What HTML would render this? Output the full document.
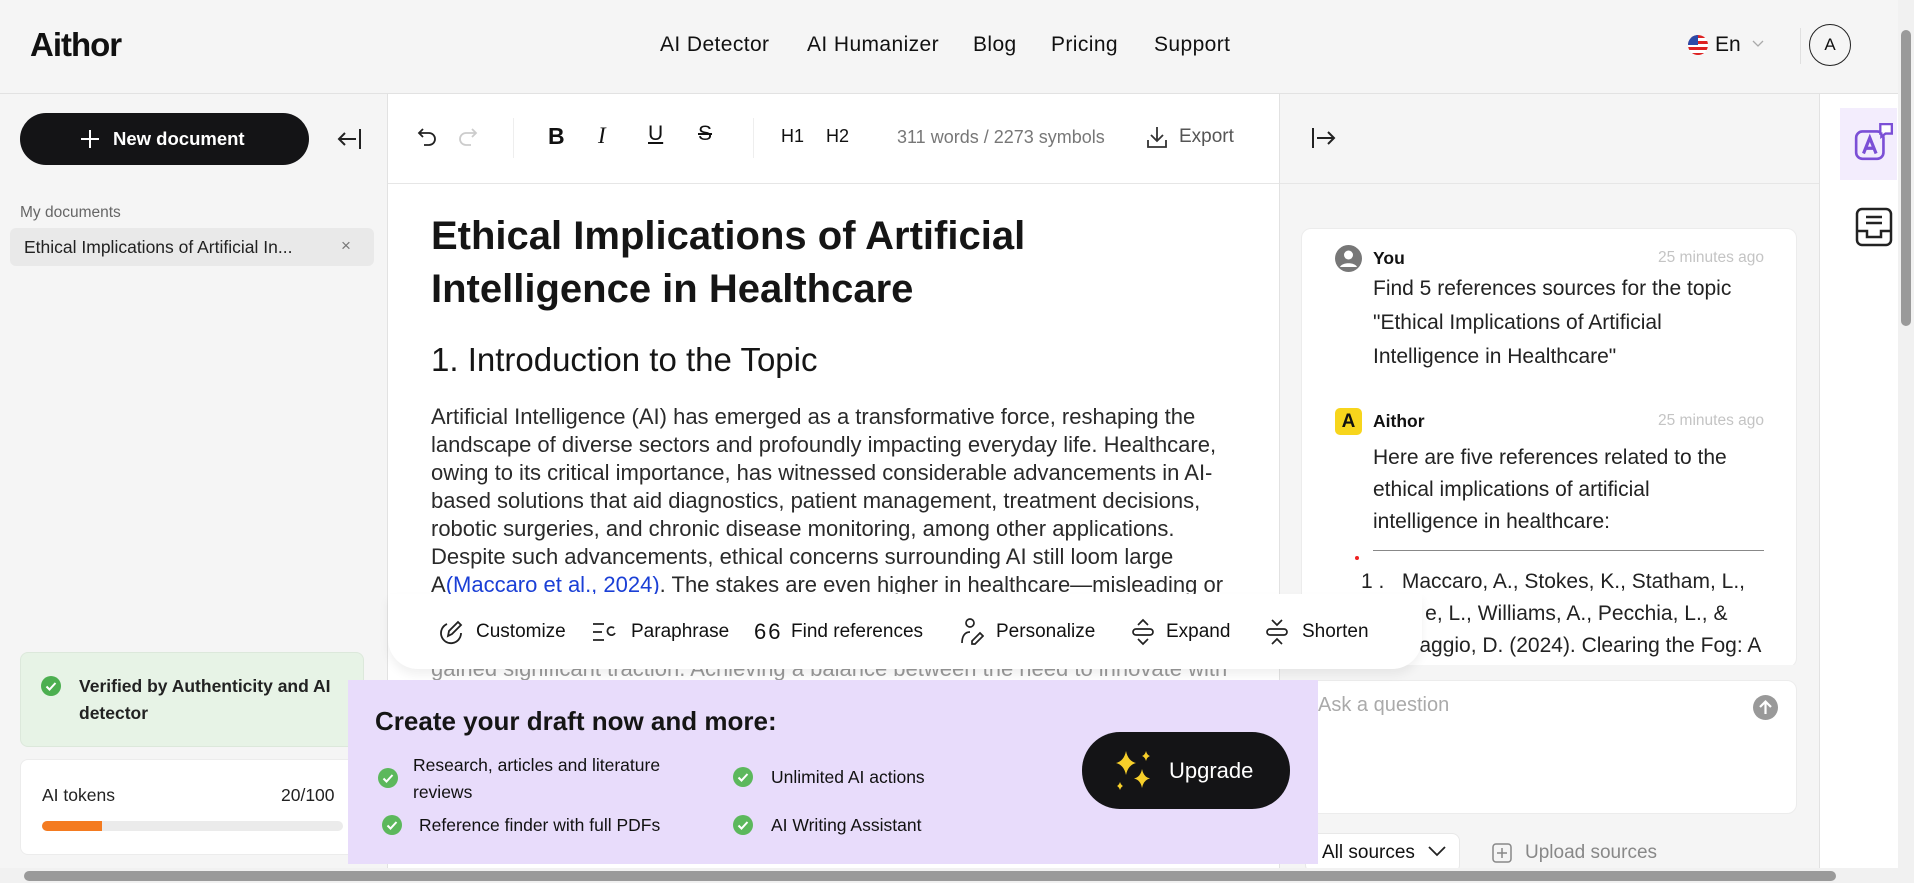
<!DOCTYPE html>
<html><head><meta charset="utf-8"><style>
*{box-sizing:border-box;margin:0;padding:0}
body{width:1914px;height:883px;overflow:hidden;background:#f5f5f5;font-family:"Liberation Sans",Arial,sans-serif;color:#111;position:relative}
.a{position:absolute;white-space:nowrap}
svg{display:block}
</style></head><body>
<!-- header -->
<div class="a" style="left:0;top:0;width:1898px;height:94px;background:#f5f5f5;border-bottom:1px solid #e2e2e2"></div>
<div class="a" style="left:30px;top:26px;font-size:33px;font-weight:bold;letter-spacing:-1px">Aithor</div>
<div class="a" style="left:660px;top:33px;font-size:21px;letter-spacing:0.4px">AI Detector</div>
<div class="a" style="left:807px;top:33px;font-size:21px;letter-spacing:0.4px">AI Humanizer</div>
<div class="a" style="left:973px;top:33px;font-size:21px;letter-spacing:0.4px">Blog</div>
<div class="a" style="left:1051px;top:33px;font-size:21px;letter-spacing:0.4px">Pricing</div>
<div class="a" style="left:1154px;top:33px;font-size:21px;letter-spacing:0.4px">Support</div>
<svg class="a" style="left:1688px;top:35px" width="20" height="20" viewBox="0 0 20 20"><defs><clipPath id="c"><circle cx="10" cy="10" r="10"/></clipPath></defs><g clip-path="url(#c)"><rect width="20" height="20" fill="#fff"/><rect y="0" width="20" height="3" fill="#d22"/><rect y="6" width="20" height="3" fill="#d22"/><rect y="12" width="20" height="3" fill="#d22"/><rect y="18" width="20" height="3" fill="#d22"/><rect width="10" height="10" fill="#2b4aa8"/></g></svg>
<div class="a" style="left:1715px;top:33px;font-size:21px">En</div>
<svg class="a" style="left:1752px;top:40px" width="12" height="8"><path d="M1 1l5 5 5-5" stroke="#aaa" fill="none" stroke-width="1.3"/></svg>
<div class="a" style="left:1800px;top:28px;width:1px;height:36px;background:#e0e0e0"></div>
<div class="a" style="left:1809px;top:24px;width:42px;height:42px;border:1.5px solid #222;border-radius:50%;text-align:center;line-height:39px;font-size:17px">A</div>

<!-- left sidebar -->
<div class="a" style="left:387px;top:94px;width:1px;height:789px;background:#e2e2e2"></div>
<div class="a" style="left:20px;top:113px;width:289px;height:52px;background:#141416;border-radius:26px;color:#fff;font-size:18.5px;font-weight:bold;line-height:52px;padding-left:93px">New document</div>
<svg class="a" style="left:80px;top:129px" width="20" height="20"><path d="M10 1v18M1 10h18" stroke="#fff" stroke-width="2"/></svg>
<svg class="a" style="left:336px;top:127px" width="26" height="24"><path d="M24 2v20M20 12H3M9 6l-6 6 6 6" stroke="#222" stroke-width="2" fill="none"/></svg>
<div class="a" style="left:20px;top:204px;font-size:15.5px;color:#666">My documents</div>
<div class="a" style="left:10px;top:228px;width:364px;height:38px;background:#e9e9e9;border-radius:6px"></div>
<div class="a" style="left:24px;top:237px;font-size:17.5px;color:#222">Ethical Implications of Artificial In...</div>
<div class="a" style="left:341px;top:236px;font-size:17px;color:#777">×</div>

<div class="a" style="left:20px;top:652px;width:344px;height:95px;background:#e7f3e6;border:1px solid #dce8db;border-radius:8px"></div>
<svg class="a" style="left:41px;top:676px" width="20" height="20"><circle cx="10" cy="10" r="10" fill="#4caf50"/><path d="M5.5 10.5l3 3 6-6.5" stroke="#fff" stroke-width="2" fill="none"/></svg>
<div class="a" style="left:79px;top:673px;font-size:17.5px;font-weight:bold;line-height:27px;color:#222">Verified by Authenticity and AI<br>detector</div>
<div class="a" style="left:20px;top:759px;width:344px;height:96px;background:#fff;border:1px solid #ececec;border-radius:8px"></div>
<div class="a" style="left:42px;top:785px;font-size:17.5px;color:#222">AI tokens</div>
<div class="a" style="left:281px;top:785px;font-size:17.5px;color:#222">20/100</div>
<div class="a" style="left:42px;top:821px;width:301px;height:10px;background:#ebebeb;border-radius:5px"></div>
<div class="a" style="left:42px;top:821px;width:60px;height:10px;background:#f47b20;border-radius:5px 0 0 5px"></div>

<!-- chat panel (behind toolbar) -->
<div class="a" style="left:1280px;top:94px;width:539px;height:789px;background:#f5f5f5"></div>
<div class="a" style="left:1280px;top:183px;width:539px;height:1px;background:#e6e6e6"></div>
<div class="a" style="left:1819px;top:94px;width:1px;height:789px;background:#e2e2e2"></div>
<svg class="a" style="left:1311px;top:126px" width="26" height="24"><path d="M2 2v20M6 12h17M17 6l6 6-6 6" stroke="#222" stroke-width="2" fill="none"/></svg>
<div class="a" style="left:1301px;top:228px;width:496px;height:440px;background:#fff;border:1px solid #ececec;border-radius:10px"></div>
<svg class="a" style="left:1335px;top:245px" width="27" height="27"><circle cx="13.5" cy="13.5" r="13.5" fill="#777"/><circle cx="13.5" cy="10" r="4.5" fill="#fff"/><path d="M5 22c2-5 15-5 17 0" fill="#fff"/></svg>
<div class="a" style="left:1373px;top:248px;font-size:17.5px;font-weight:bold">You</div>
<div class="a" style="left:1614px;top:249px;width:150px;text-align:right;font-size:15.5px;color:#c4c4c4">25 minutes ago</div>
<div class="a" style="left:1373px;top:272px;font-size:21px;line-height:34px;color:#222">Find 5 references sources for the topic<br>"Ethical Implications of Artificial<br>Intelligence in Healthcare"</div>
<div class="a" style="left:1335px;top:408px;width:27px;height:27px;background:#f7d51c;border-radius:5px;text-align:center;line-height:27px;font-weight:bold;font-size:19px">A</div>
<div class="a" style="left:1373px;top:411px;font-size:17.5px;font-weight:bold">Aithor</div>
<div class="a" style="left:1614px;top:412px;width:150px;text-align:right;font-size:15.5px;color:#c4c4c4">25 minutes ago</div>
<div class="a" style="left:1373px;top:442px;font-size:21px;line-height:32px;color:#222">Here are five references related to the<br>ethical implications of artificial<br>intelligence in healthcare:</div>
<div class="a" style="left:1373px;top:550px;width:391px;height:1px;background:#888"></div>
<div class="a" style="left:1355px;top:556px;width:4px;height:4px;border-radius:50%;background:#e22"></div>
<div class="a" style="left:1361px;top:566px;font-size:21px;line-height:32px;color:#222">1 .&nbsp;&nbsp;&nbsp;Maccaro, A., Stokes, K., Statham, L.,<br>&nbsp;&nbsp;&nbsp;&nbsp;&nbsp;&nbsp;&nbsp;&nbsp;&nbsp;&nbsp;&nbsp;e, L., Williams, A., Pecchia, L., &amp;<br>&nbsp;&nbsp;&nbsp;&nbsp;&nbsp;&nbsp;&nbsp;&nbsp;&nbsp;&nbsp;aggio, D. (2024). Clearing the Fog: A</div>
<div class="a" style="left:1300px;top:665px;width:498px;height:14px;background:#f5f5f5"></div>
<div class="a" style="left:1301px;top:680px;width:496px;height:134px;background:#fff;border:1px solid #ececec;border-radius:10px"></div>
<div class="a" style="left:1318px;top:694px;font-size:20px;color:#aaa">Ask a question</div>
<svg class="a" style="left:1753px;top:695px" width="25" height="25"><circle cx="12.5" cy="12.5" r="12.5" fill="#999"/><path d="M12.5 19V7M7 12l5.5-5.5L18 12" stroke="#fff" stroke-width="2.2" fill="none"/></svg>
<div class="a" style="left:1305px;top:833px;width:155px;height:40px;background:#fff;border:1px solid #e8e8e8;border-radius:8px"></div>
<div class="a" style="left:1322px;top:842px;font-size:19px">All sources</div>
<svg class="a" style="left:1427px;top:845px" width="20" height="12"><path d="M2 2l8 8 8-8" stroke="#222" stroke-width="1.8" fill="none"/></svg>
<svg class="a" style="left:1492px;top:843px" width="20" height="20"><rect x="1" y="1" width="18" height="18" rx="3" stroke="#888" stroke-width="1.5" fill="none"/><path d="M10 5v10M5 10h10" stroke="#888" stroke-width="1.5"/></svg>
<div class="a" style="left:1525px;top:842px;font-size:19px;color:#888">Upload sources</div>

<!-- editor -->
<div class="a" style="left:388px;top:94px;width:891px;height:789px;background:#fff"></div>
<div class="a" style="left:388px;top:183px;width:891px;height:1px;background:#e6e6e6"></div>
<div class="a" style="left:1279px;top:94px;width:1px;height:789px;background:#e2e2e2"></div>
<svg class="a" style="left:416px;top:126px" width="22" height="22"><path d="M7 3L3 7l4 4M3 7h10a6 6 0 010 12H8" stroke="#222" stroke-width="1.8" fill="none"/></svg>
<svg class="a" style="left:457px;top:126px" width="22" height="22"><path d="M15 3l4 4-4 4M19 7H9a6 6 0 000 12h5" stroke="#ccc" stroke-width="1.8" fill="none"/></svg>
<div class="a" style="left:513px;top:118px;width:1px;height:40px;background:#eee"></div>
<div class="a" style="left:548px;top:123px;font-size:23px;font-weight:bold">B</div>
<div class="a" style="left:598px;top:123px;font-size:23px;font-style:italic;font-family:'Liberation Serif',serif">I</div>
<div class="a" style="left:648px;top:122px;font-size:21px;text-decoration:underline">U</div>
<div class="a" style="left:698px;top:122px;font-size:21px;text-decoration:line-through">S</div>
<div class="a" style="left:753px;top:118px;width:1px;height:40px;background:#eee"></div>
<div class="a" style="left:781px;top:126px;font-size:18px">H1</div>
<div class="a" style="left:826px;top:126px;font-size:18px">H2</div>
<div class="a" style="left:897px;top:127px;font-size:18px;color:#777">311 words / 2273 symbols</div>
<svg class="a" style="left:1146px;top:125px" width="22" height="24"><path d="M11 2v14M5 10l6 6 6-6M2 15v7h18v-7" stroke="#333" stroke-width="1.8" fill="none"/></svg>
<div class="a" style="left:1179px;top:126px;font-size:19px;color:#555">Export</div>

<div class="a" style="left:431px;top:210px;font-size:40px;font-weight:bold;line-height:53px;color:#151515">Ethical Implications of Artificial<br>Intelligence in Healthcare</div>
<div class="a" style="left:431px;top:341px;font-size:33px;color:#151515">1. Introduction to the Topic</div>
<div class="a" style="left:431px;top:403px;font-size:22px;line-height:28px;color:#2a2a2a">Artificial Intelligence (AI) has emerged as a transformative force, reshaping the<br>landscape of diverse sectors and profoundly impacting everyday life. Healthcare,<br>owing to its critical importance, has witnessed considerable advancements in AI-<br>based solutions that aid diagnostics, patient management, treatment decisions,<br>robotic surgeries, and chronic disease monitoring, among other applications.<br>Despite such advancements, ethical concerns surrounding AI still loom large<br>A<span style="color:#1a3fd6">(Maccaro et al., 2024)</span>. The stakes are even higher in healthcare—misleading or</div>
<div class="a" style="left:431px;top:656px;font-size:22px;color:#999">gained significant traction. Achieving a balance between the need to innovate with</div>

<!-- floating toolbar -->
<div class="a" style="left:388px;top:594px;width:1034px;height:75px;background:#fff;border-radius:0 0 30px 30px;box-shadow:0 6px 10px rgba(0,0,0,0.06)"></div>
<svg class="a" style="left:439px;top:619px" width="26" height="26"><path d="M8 5a10 10 0 1 0 14 9M9 17l1-5 9-9 3 3-9 9z" stroke="#222" stroke-width="1.8" fill="none"/></svg>
<div class="a" style="left:476px;top:621px;font-size:19px">Customize</div>
<svg class="a" style="left:592px;top:621px" width="26" height="22"><path d="M1 3h11M1 11h9M1 19h11M22 7a4 4 0 1 0 1 5" stroke="#222" stroke-width="1.8" fill="none"/></svg>
<div class="a" style="left:631px;top:621px;font-size:19px">Paraphrase</div>
<div class="a" style="left:754px;top:619px;font-size:22px;letter-spacing:2px">66</div>
<div class="a" style="left:791px;top:621px;font-size:19px">Find references</div>
<svg class="a" style="left:960px;top:617px" width="24" height="28"><circle cx="10" cy="6" r="4" stroke="#222" stroke-width="1.7" fill="none"/><path d="M2 26c0-7 3-11 8-11M12 24l8-8 3 3-8 8h-3z" stroke="#222" stroke-width="1.7" fill="none"/></svg>
<div class="a" style="left:996px;top:621px;font-size:19px">Personalize</div>
<svg class="a" style="left:1131px;top:618px" width="24" height="28"><path d="M7 7l5-5 5 5M7 21l5 5 5-5" stroke="#222" stroke-width="1.7" fill="none"/><rect x="2" y="11" width="20" height="6" rx="3" stroke="#222" stroke-width="1.7" fill="none"/></svg>
<div class="a" style="left:1166px;top:621px;font-size:19px">Expand</div>
<svg class="a" style="left:1265px;top:618px" width="24" height="28"><path d="M7 2l5 5 5-5M7 26l5-5 5 5" stroke="#222" stroke-width="1.7" fill="none"/><rect x="2" y="11" width="20" height="6" rx="3" stroke="#222" stroke-width="1.7" fill="none"/></svg>
<div class="a" style="left:1302px;top:621px;font-size:19px">Shorten</div>

<!-- upgrade card -->
<div class="a" style="left:348px;top:680px;width:970px;height:184px;background:#e8dcfb"></div>
<div class="a" style="left:375px;top:706px;font-size:26px;font-weight:bold;color:#151515">Create your draft now and more:</div>
<svg class="a" style="left:378px;top:768px" width="20" height="20"><circle cx="10" cy="10" r="10" fill="#5cb85c"/><path d="M5.5 10.5l3 3 6-6.5" stroke="#fff" stroke-width="2" fill="none"/></svg>
<div class="a" style="left:413px;top:752px;font-size:17.5px;font-weight:500;line-height:27px">Research, articles and literature<br>reviews</div>
<svg class="a" style="left:382px;top:815px" width="20" height="20"><circle cx="10" cy="10" r="10" fill="#5cb85c"/><path d="M5.5 10.5l3 3 6-6.5" stroke="#fff" stroke-width="2" fill="none"/></svg>
<div class="a" style="left:419px;top:815px;font-size:17.5px;font-weight:500">Reference finder with full PDFs</div>
<svg class="a" style="left:733px;top:767px" width="20" height="20"><circle cx="10" cy="10" r="10" fill="#5cb85c"/><path d="M5.5 10.5l3 3 6-6.5" stroke="#fff" stroke-width="2" fill="none"/></svg>
<div class="a" style="left:771px;top:767px;font-size:17.5px;font-weight:500">Unlimited AI actions</div>
<svg class="a" style="left:733px;top:815px" width="20" height="20"><circle cx="10" cy="10" r="10" fill="#5cb85c"/><path d="M5.5 10.5l3 3 6-6.5" stroke="#fff" stroke-width="2" fill="none"/></svg>
<div class="a" style="left:771px;top:815px;font-size:17.5px;font-weight:500">AI Writing Assistant</div>
<div class="a" style="left:1082px;top:732px;width:208px;height:77px;background:#141416;border-radius:38px"></div>
<svg class="a" style="left:1114px;top:749px" width="40" height="44" viewBox="0 0 40 44"><path d="M12 2q2 10 10 12q-8 2-10 12q-2-10-10-12q8-2 10-12z" fill="#f7cf2a"/><path d="M28 20q1.5 8 8 9.5q-6.5 1.5-8 9.5q-1.5-8-8-9.5q6.5-1.5 8-9.5z" fill="#f7cf2a"/><path d="M32 2q1 4 4 5q-3 1-4 5q-1-4-4-5q3-1 4-5z" fill="#f7cf2a"/><path d="M6 33q1 3 3 4q-2 1-3 4q-1-3-3-4q2-1 3-4z" fill="#f7cf2a"/></svg>
<div class="a" style="left:1169px;top:758px;font-size:22px;font-weight:500;color:#fff">Upgrade</div>

<!-- right rail -->
<div class="a" style="left:1820px;top:94px;width:78px;height:789px;background:#fff"></div>
<div class="a" style="left:1840px;top:108px;width:57px;height:72px;background:#f3edfd"></div>
<svg class="a" style="left:1853px;top:122px" width="42" height="42" viewBox="0 0 40 40"><rect x="3" y="9" width="26" height="26" rx="6" stroke="#7b4fd6" stroke-width="2.5" fill="none"/><path d="M10 30l6-15 6 15M12 25h8" stroke="#7b4fd6" stroke-width="3" fill="none"/><path d="M26 2h11v9h-6l-4 3v-3h-1z" stroke="#7b4fd6" stroke-width="2.2" fill="#fff"/></svg>
<svg class="a" style="left:1855px;top:207px" width="38" height="40" viewBox="0 0 38 40"><rect x="2" y="2" width="34" height="36" rx="5" stroke="#222" stroke-width="2.5" fill="none"/><path d="M11 10h16M11 16h16M2 24h10v6h14v-6h10" stroke="#222" stroke-width="2.5" fill="none"/></svg>

<!-- scrollbars -->
<div class="a" style="left:1898px;top:0;width:16px;height:883px;background:#f1f1f1"></div>
<div class="a" style="left:1901px;top:30px;width:10px;height:296px;background:#9a9a9a;border-radius:5px"></div>
<div class="a" style="left:0;top:868px;width:1898px;height:15px;background:#f1f1f1"></div>
<div class="a" style="left:24px;top:871px;width:1812px;height:10px;background:#9a9a9a;border-radius:5px"></div>
</body></html>
